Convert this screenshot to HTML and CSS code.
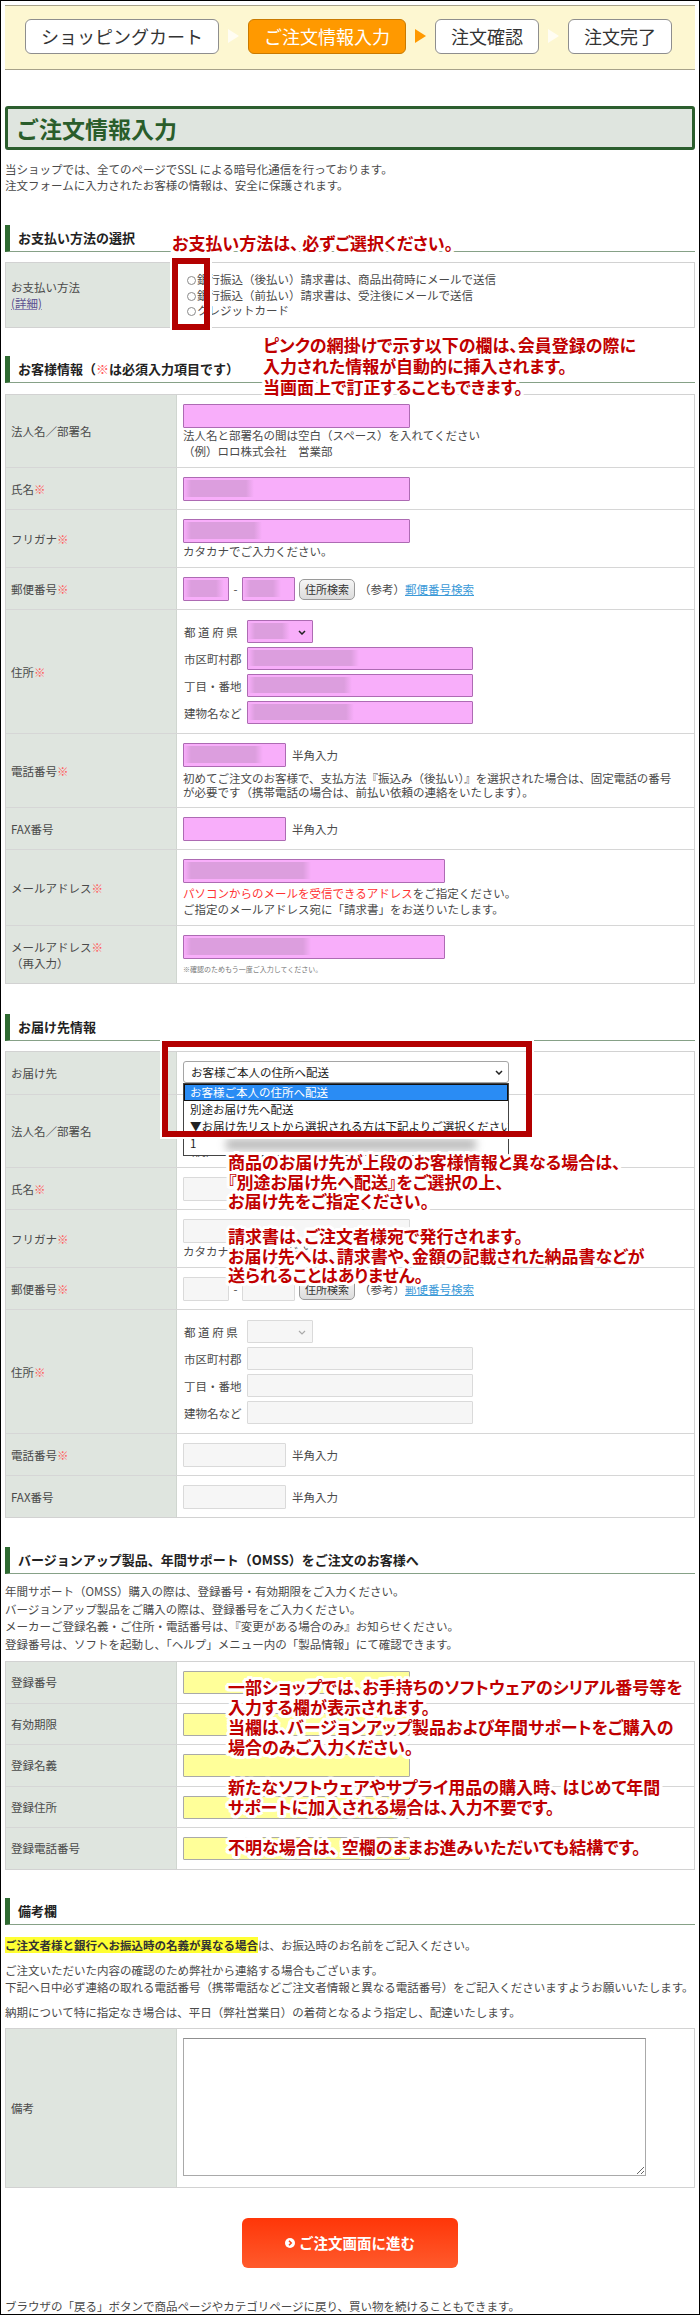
FILE: index.html
```html
<!DOCTYPE html>
<html lang="ja">
<head>
<meta charset="utf-8">
<title>ご注文情報入力</title>
<link rel="stylesheet" href="styles.css">
</head>
<body>
<div class="page">
  <div class="steps">
    <span class="step">ショッピングカート</span><span class="arrow"></span>
    <span class="step on">ご注文情報入力</span><span class="arrow on"></span>
    <span class="step">注文確認</span><span class="arrow"></span>
    <span class="step">注文完了</span>
  </div>

  <h1 class="title">ご注文情報入力</h1>
  <p class="intro">当ショップでは、全てのページでSSL による暗号化通信を行っております。<br>注文フォームに入力されたお客様の情報は、安全に保護されます。</p>

  <h2 class="sec sec-pay">お支払い方法の選択</h2>
  <div class="form form-pay">
    <div class="note note1">お支払い方法は、 必ずご選択ください。</div>
    <div class="redbox redbox1"></div>
    <div class="row">
      <div class="lab">お支払い方法<a class="lnk-v">(詳細)</a></div>
      <div class="val val-pay">
        <div><span class="radio"></span>銀行振込（後払い）請求書は、商品出荷時にメールで送信</div>
        <div><span class="radio"></span>銀行振込（前払い）請求書は、受注後にメールで送信</div>
        <div><span class="radio"></span>クレジットカード</div>
      </div>
    </div>
  </div>

  <h2 class="sec sec-cust">お客様情報（<span class="req">※</span>は必須入力項目です）</h2>
  <div class="form form-cust">
    <div class="note note2">ピンクの網掛けで示す以下の欄は、会員登録の際に<br>入力された情報が自動的に挿入されます。<br>当画面上で訂正することもできます。</div>
    <div class="row">
      <div class="lab">法人名／部署名</div>
      <div class="val">
        <span class="inp pink w-l"></span>
        <div class="help help-tight">法人名と部署名の間は空白（スペース）を入れてください<br>（例）ロロ株式会社　営業部</div>
      </div>
    </div>
    <div class="row">
      <div class="lab"><span>氏名<span class="req">※</span></span></div>
      <div class="val"><span class="inp pink w-l smudge sw70"></span></div>
    </div>
    <div class="row">
      <div class="lab"><span>フリガナ<span class="req">※</span></span></div>
      <div class="val">
        <span class="inp pink w-l smudge sw78"></span>
        <div class="help">カタカナでご入力ください。</div>
      </div>
    </div>
    <div class="row">
      <div class="lab"><span>郵便番号<span class="req">※</span></span></div>
      <div class="val">
        <div class="line">
          <span class="inp pink w-z1 smudge sw40"></span><span class="dash">-</span><span class="inp pink w-z2 smudge sw38"></span>
          <span class="btn">住所検索</span><span class="ref">（参考）</span><a class="lnk">郵便番号検索</a>
        </div>
      </div>
    </div>
    <div class="row">
      <div class="lab"><span>住所<span class="req">※</span></span></div>
      <div class="val">
        <div class="addr">
          <span>都 道 府 県</span>
          <span class="inp pink pref smudge sw42"><svg class="chev" width="8" height="5" viewBox="0 0 8 5"><path d="M1 1l3 3 3-3" fill="none" stroke="#222" stroke-width="1.5"/></svg></span>
          <span>市区町村郡</span><span class="inp pink w-a smudge sw111"></span>
          <span>丁目・番地</span><span class="inp pink w-a smudge sw104"></span>
          <span>建物名など</span><span class="inp pink w-a smudge sw106"></span>
        </div>
      </div>
    </div>
    <div class="row">
      <div class="lab"><span>電話番号<span class="req">※</span></span></div>
      <div class="val">
        <div class="line"><span class="inp pink w-s smudge sw79"></span><span class="half">半角入力</span></div>
        <div class="help help-tel">初めてご注文のお客様で、支払方法『振込み（後払い）』を選択された場合は、固定電話の番号<br>が必要です（携帯電話の場合は、前払い依頼の連絡をいたします）。</div>
      </div>
    </div>
    <div class="row">
      <div class="lab">FAX番号</div>
      <div class="val"><div class="line"><span class="inp pink w-s"></span><span class="half">半角入力</span></div></div>
    </div>
    <div class="row">
      <div class="lab"><span>メールアドレス<span class="req">※</span></span></div>
      <div class="val">
        <span class="inp pink w-m smudge sw127"></span>
        <div class="help help-mail"><span class="red">パソコンからのメールを受信できるアドレス</span>をご指定ください。<br>ご指定のメールアドレス宛に「請求書」をお送りいたします。</div>
      </div>
    </div>
    <div class="row">
      <div class="lab"><span>メールアドレス<span class="req">※</span></span><span>（再入力）</span></div>
      <div class="val">
        <span class="inp pink w-m smudge sw127"></span>
        <div class="tiny">※確認のためもう一度ご入力してください。</div>
      </div>
    </div>
  </div>

  <h2 class="sec sec-del">お届け先情報</h2>
  <div class="form form-del">
    <div class="dd">
      <div class="opt opt-on">お客様ご本人の住所へ配送</div>
      <div class="opt">別途お届け先へ配送</div>
      <div class="opt">▼お届け先リストから選択される方は下記よりご選択ください</div>
      <div class="opt">1<span class="blurred"></span></div>
    </div>
    <div class="redbox redbox2"></div>
    <div class="note note3">
      <p>商品のお届け先が上段のお客様情報と異なる場合は、<br>『別途お届け先へ配送』をご選択の上、<br>お届け先をご指定ください。</p>
      <p class="note3b">請求書は、ご注文者様宛で発行されます。<br>お届け先へは、請求書や、金額の記載された納品書などが<br>送られることはありません。</p>
    </div>
    <div class="row">
      <div class="lab">お届け先</div>
      <div class="val val-sel">
        <span class="selbox">お客様ご本人の住所へ配送<svg class="chev" width="8" height="5" viewBox="0 0 8 5"><path d="M1 1l3 3 3-3" fill="none" stroke="#222" stroke-width="1.5"/></svg></span>
      </div>
    </div>
    <div class="row">
      <div class="lab">法人名／部署名</div>
      <div class="val">
        <span class="inp grey w-l"></span>
        <div class="help help-tight">法人名と部署名の間は空白（スペース）を入れてください<br>（例）ロロ株式会社　営業部</div>
      </div>
    </div>
    <div class="row">
      <div class="lab"><span>氏名<span class="req">※</span></span></div>
      <div class="val"><span class="inp grey w-l"></span></div>
    </div>
    <div class="row">
      <div class="lab"><span>フリガナ<span class="req">※</span></span></div>
      <div class="val">
        <span class="inp grey w-l"></span>
        <div class="help">カタカナでご入力ください。</div>
      </div>
    </div>
    <div class="row">
      <div class="lab"><span>郵便番号<span class="req">※</span></span></div>
      <div class="val">
        <div class="line">
          <span class="inp grey w-z1"></span><span class="dash">-</span><span class="inp grey w-z2"></span>
          <span class="btn">住所検索</span><span class="ref">（参考）</span><a class="lnk">郵便番号検索</a>
        </div>
      </div>
    </div>
    <div class="row">
      <div class="lab"><span>住所<span class="req">※</span></span></div>
      <div class="val">
        <div class="addr">
          <span>都 道 府 県</span>
          <span class="inp grey pref"><svg class="chev" width="8" height="5" viewBox="0 0 8 5"><path d="M1 1l3 3 3-3" fill="none" stroke="#aaa" stroke-width="1.2"/></svg></span>
          <span>市区町村郡</span><span class="inp grey w-a"></span>
          <span>丁目・番地</span><span class="inp grey w-a"></span>
          <span>建物名など</span><span class="inp grey w-a"></span>
        </div>
      </div>
    </div>
    <div class="row">
      <div class="lab"><span>電話番号<span class="req">※</span></span></div>
      <div class="val"><div class="line"><span class="inp grey w-s"></span><span class="half">半角入力</span></div></div>
    </div>
    <div class="row">
      <div class="lab">FAX番号</div>
      <div class="val"><div class="line"><span class="inp grey w-s"></span><span class="half">半角入力</span></div></div>
    </div>
  </div>

  <h2 class="sec sec-ver">バージョンアップ製品、年間サポート（OMSS）をご注文のお客様へ</h2>
  <p class="ver-intro">年間サポート（OMSS）購入の際は、登録番号・有効期限をご入力ください。<br>バージョンアップ製品をご購入の際は、登録番号をご入力ください。<br>メーカーご登録名義・ご住所・電話番号は、『変更がある場合のみ』お知らせください。<br>登録番号は、ソフトを起動し、「ヘルプ」メニュー内の「製品情報」にて確認できます。</p>
  <div class="form form-ver">
    <div class="note note4">一部ショップでは、お手持ちのソフトウェアのシリアル番号等を<br>入力する欄が表示されます。<br>当欄は、バージョンアップ製品および年間サポートをご購入の<br>場合のみご入力ください。<br><br>新たなソフトウェアやサプライ用品の購入時、 はじめて年間<br>サポートに加入される場合は、入力不要です。<br><br>不明な場合は、 空欄のままお進みいただいても結構です。</div>
    <div class="row"><div class="lab">登録番号</div><div class="val val-y"><span class="inp yel w-l"></span></div></div>
    <div class="row"><div class="lab">有効期限</div><div class="val val-y"><span class="inp yel w-l"></span></div></div>
    <div class="row"><div class="lab">登録名義</div><div class="val val-y"><span class="inp yel w-l"></span></div></div>
    <div class="row"><div class="lab">登録住所</div><div class="val val-y"><span class="inp yel w-l"></span></div></div>
    <div class="row"><div class="lab">登録電話番号</div><div class="val val-y"><span class="inp yel w-l"></span></div></div>
  </div>

  <h2 class="sec sec-note">備考欄</h2>
  <p class="np np1"><span class="hl">ご注文者様と銀行へお振込時の名義が異なる場合</span>は、お振込時のお名前をご記入ください。</p>
  <p class="np">ご注文いただいた内容の確認のため弊社から連絡する場合もございます。<br>下記へ日中必ず連絡の取れる電話番号（携帯電話などご注文者情報と異なる電話番号）をご記入くださいますようお願いいたします。</p>
  <p class="np">納期について特に指定なき場合は、平日（弊社営業日）の着荷となるよう指定し、配達いたします。</p>
  <div class="form form-bik">
    <div class="row">
      <div class="lab">備考</div>
      <div class="val val-ta"><textarea class="ta"></textarea></div>
    </div>
  </div>

  <div class="submit"><svg width="10" height="10" viewBox="0 0 10 10"><circle cx="5" cy="5" r="5" fill="#fff"/><path d="M4 2.8l2.2 2.2-2.2 2.2" fill="none" stroke="#ff4112" stroke-width="1.6"/></svg><span>ご注文画面に進む</span></div>

  <p class="foot">ブラウザの「戻る」ボタンで商品ページやカテゴリページに戻り、買い物を続けることもできます。</p>
</div>
</body>
</html>
```

FILE: styles.css
```css
body {
  margin: 0;
  background: #fff;
  font-family: "Noto Sans CJK JP", "Noto Sans", sans-serif;
}

.page {
  position: relative;
  width: 700px;
  height: 2315px;
  box-sizing: border-box;
  border: 1px solid #000;
  padding: 4px 4px 0;
  overflow: hidden;
  color: #4a4a4a;
  font-size: 11.5px;
  line-height: 16px;
}

p { margin: 0; }

/* steps */
.steps {
  height: 65px;
  box-sizing: border-box;
  border-top: 1px solid #a7a28a;
  border-bottom: 1px solid #a7a28a;
  background: #fdf7d1;
  padding: 13px 0 0 20px;
  display: flex;
  align-items: flex-start;
  gap: 9px;
}
.step {
  height: 35px;
  box-sizing: border-box;
  border: 1px solid #8e8e8e;
  border-radius: 6px;
  background: #fff;
  padding: 0 15px;
  font-size: 18px;
  line-height: 33px;
  color: #333;
}
.step.on {
  background: #ff9900;
  border-color: #c97a00;
  color: #fff;
}
.arrow {
  width: 0;
  height: 0;
  margin-top: 10px;
  border-left: 11px solid #fffdf3;
  border-top: 7px solid transparent;
  border-bottom: 7px solid transparent;
}
.arrow.on { border-left-color: #ff9900; }

/* title */
.title {
  margin: 36px 0 0;
  height: 44px;
  box-sizing: border-box;
  border: 3px solid #2c5e2e;
  border-radius: 3px;
  background: #dfe5df;
  padding-left: 8px;
  color: #2a5d2b;
  font-size: 23px;
  font-weight: 700;
  line-height: 38px;
}
.intro { margin-top: 12px; line-height: 15.5px; }

/* section headings */
.sec {
  margin: 0;
  height: 27px;
  box-sizing: border-box;
  border-left: 5px solid #2e6a31;
  border-bottom: 1px solid #86a187;
  padding-left: 8px;
  color: #222;
  font-size: 13px;
  font-weight: 700;
  line-height: 26px;
}
.sec-pay { margin-top: 32px; }
.sec-cust { margin-top: 28px; }
.sec-del { margin-top: 30px; }
.sec-ver { margin-top: 29px; }
.sec-note { margin-top: 28px; }
.req { color: #ff5c5c; font-weight: 400; }

/* form tables */
.form {
  position: relative;
  margin-top: 10px;
  border: 1px solid #d2d2d2;
}
.form-cust { margin-top: 11px; }
.form-ver { margin-top: 8px; }
.form-bik { margin-top: 7px; }

.row {
  display: grid;
  grid-template-columns: 171px 1fr;
  border-bottom: 1px solid #d6d6d6;
}
.row:last-child { border-bottom: 0; }
.lab {
  display: flex;
  flex-direction: column;
  justify-content: center;
  padding-left: 5px;
  background: #dfe5df;
  border-right: 1px solid #d0d6d0;
  line-height: 16px;
}
.val { padding: 9px 6px 8px; line-height: 16px; }
.val-pay { padding: 9px 6px 8.5px; line-height: 15.5px; }
.val-sel { padding-bottom: 11px; }
.val-y { padding: 9px 6px 8.5px; }
.val-ta { padding: 9px 6px 11px; }

.lnk-v { color: #5b4f8f; text-decoration: underline; text-decoration-color: #8a80b0; }
.radio {
  display: inline-block;
  width: 9px;
  height: 9px;
  box-sizing: border-box;
  border: 1px solid #8a8a8a;
  border-radius: 50%;
  margin: 0 1px 0 4px;
  vertical-align: -1px;
}

/* inputs */
.inp {
  display: block;
  position: relative;
  height: 24px;
  box-sizing: border-box;
  border: 1px solid #ad6bb3;
  border-radius: 1px;
}
.pink { background-color: #f8aefa; }
.grey { background-color: #f6f6f6; border-color: #dadada; }
.yel { background-color: #ffff99; border-color: #a9a9a9; height: 23px; }
.w-l { width: 227px; }
.w-m { width: 262px; }
.w-s { width: 103px; }
.w-a { width: 226px; height: 23px; }
.w-z1 { width: 46px; }
.w-z2 { width: 53px; }
.pref { width: 66px; height: 23px; }
.pref .chev { position: absolute; right: 6px; top: 9px; }

.smudge {
  background-image: linear-gradient(90deg, rgba(220,158,222,0) 0, #dc9ede 7px, #dc9ede calc(var(--sw) - 8px), rgba(220,158,222,0) var(--sw));
  background-repeat: no-repeat;
  background-size: 100% 78%;
  background-position: 0 50%;
}
.sw38 { --sw: 38px; }
.sw40 { --sw: 40px; }
.sw42 { --sw: 42px; }
.sw70 { --sw: 70px; }
.sw78 { --sw: 78px; }
.sw79 { --sw: 79px; }
.sw104 { --sw: 104px; }
.sw106 { --sw: 106px; }
.sw111 { --sw: 111px; }
.sw127 { --sw: 127px; }

.help { margin-top: 0; }
.help-tight { margin-top: -1px; }
.help-tel { margin-top: 4px; line-height: 14px; }
.help-mail { margin-top: 2px; }
.red { color: #ff3333; }
.tiny { margin-top: 4px; font-size: 7px; line-height: 12px; color: #777; }

.line { display: flex; align-items: center; }
.dash { width: 13px; text-align: center; }
.btn {
  margin-left: 4px;
  width: 56px;
  height: 21px;
  box-sizing: border-box;
  border: 1px solid #9a9a9a;
  border-radius: 5px;
  background: linear-gradient(#f6f6f6, #dcdcdc);
  color: #333;
  font-size: 11px;
  line-height: 19px;
  text-align: center;
}
.ref { margin-left: 4px; }
.lnk { color: #3b9ad8; text-decoration: underline; }
.half { margin-left: 6px; }

.addr {
  display: grid;
  grid-template-columns: 63px 226px;
  row-gap: 4px;
  align-items: center;
  margin: 1px 0;
  padding-left: 1px;
}

.selbox {
  display: flex;
  align-items: center;
  justify-content: space-between;
  width: 326px;
  height: 22px;
  box-sizing: border-box;
  padding: 0 5px 0 7px;
  border: 1px solid #a5a5a5;
  border-radius: 3px;
  background: #fff;
  color: #222;
}

/* open dropdown list */
.dd {
  position: absolute;
  left: 177px;
  top: 31px;
  width: 326px;
  height: 73px;
  box-sizing: border-box;
  border: 1px solid #444;
  background: #fff;
  color: #222;
  z-index: 3;
}
.opt { height: 17px; line-height: 17px; padding-left: 6px; white-space: nowrap; overflow: hidden; }
.opt-on { background: #2a8cf4; color: #fff; outline: 1px solid #111; outline-offset: -1px; }
.blurred {
  display: inline-block;
  width: 250px;
  height: 11px;
  margin-left: 30px;
  vertical-align: middle;
  background: #b8b8b8;
  filter: blur(4px);
}

/* red annotation boxes */
.redbox {
  position: absolute;
  box-sizing: border-box;
  border: 6px solid #b30000;
  outline: 2px solid #fff;
  z-index: 4;
}
.redbox1 { left: 166px; top: -5px; width: 38px; height: 72px; }
.redbox2 { left: 156px; top: -11px; width: 370px; height: 96px; }

/* red notes */
.note {
  position: absolute;
  z-index: 5;
  color: #c00000;
  font-weight: 700;
  font-size: 17px;
  white-space: nowrap;
  font-feature-settings: "palt";
  text-shadow:
    3px 0 #fff, -3px 0 #fff, 0 3px #fff, 0 -3px #fff,
    2px 2px #fff, -2px -2px #fff, 2px -2px #fff, -2px 2px #fff,
    3px 1.5px #fff, -3px 1.5px #fff, 3px -1.5px #fff, -3px -1.5px #fff,
    1.5px 3px #fff, -1.5px 3px #fff, 1.5px -3px #fff, -1.5px -3px #fff,
    0 0 4px #fff;
}
.note1 { left: 166px; top: -30px; line-height: 20px; }
.note2 { left: 257px; top: -61px; line-height: 21px; }
.note3 { left: 222px; top: 100px; line-height: 19.5px; }
.note3b { margin-top: 15.5px; }
.note4 { left: 222px; top: 15px; line-height: 20px; }

/* version / notes */
.ver-intro { margin-top: 9px; line-height: 17.5px; }
.np { margin-top: 8px; line-height: 17px; }
.np1 { margin-top: 12px; }
.hl { background: #ffff33; color: #333; font-weight: 700; }

.ta {
  display: block;
  width: 463px;
  height: 138px;
  box-sizing: border-box;
  margin: 0;
  border: 1px solid #a9a9a9;
  border-top-color: #8f8f8f;
  background: #fff;
}

.submit {
  display: flex;
  align-items: center;
  justify-content: center;
  gap: 4px;
  width: 216px;
  height: 50px;
  margin: 30px auto 0;
  border-radius: 6px;
  background: linear-gradient(#ff3608, #ff5a2c);
  color: #fff;
  font-size: 14.5px;
  font-weight: 700;
}

.foot { margin-top: 30px; line-height: 16px; }
```
